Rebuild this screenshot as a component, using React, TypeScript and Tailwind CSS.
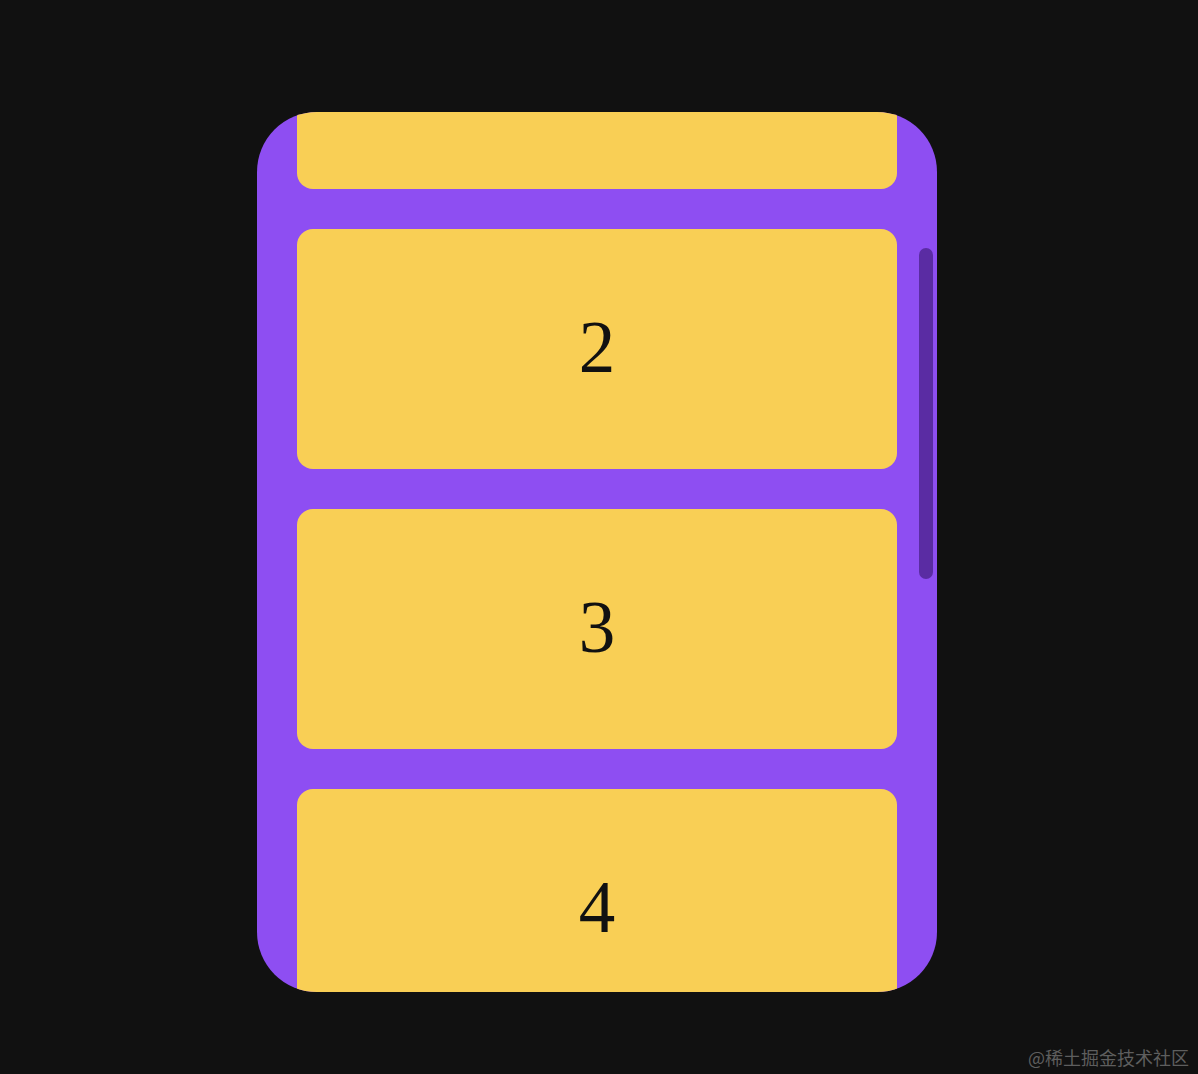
import React, { useEffect, useRef } from "react";

export default function App() {
  const ref = useRef<HTMLDivElement>(null);
  useEffect(() => {
    if (ref.current) ref.current.scrollTop = 203;
  }, []);
  const items = [1, 2, 3, 4, 5, 6, 7, 8];
  return (
    <div className="relative w-[1198px] h-[1074px] bg-[#111111] overflow-hidden pt-[112px] pl-[257px]">
      <div className="relative w-[680px] h-[880px]">
        <div
          ref={ref}
          className="w-[680px] h-[880px] rounded-[60px] bg-[#8e4ef2] overflow-hidden"
        >
          <div className="flex flex-col gap-10 px-10 py-10">
            {items.map((n) => (
              <div
                key={n}
                className="h-[240px] w-[600px] shrink-0 rounded-2xl bg-[#f9cf55] flex items-center justify-center pb-[4px] text-[73px] leading-none text-[#111111]"
                style={{ fontFamily: '"Liberation Serif", "Times New Roman", serif' }}
              >
                {n}
              </div>
            ))}
          </div>
        </div>
        <div className="absolute left-[662px] top-[136px] w-[14px] h-[331px] rounded-full bg-[#5a2ca3]" />
      </div>
      <div
        className="absolute right-[9px] bottom-[8px] text-[18px] text-[#5e5e5e] leading-none"
        style={{ fontFamily: '"Noto Sans CJK SC", "Noto Sans", sans-serif' }}
      >
        @稀土掘金技术社区
      </div>
    </div>
  );
}
